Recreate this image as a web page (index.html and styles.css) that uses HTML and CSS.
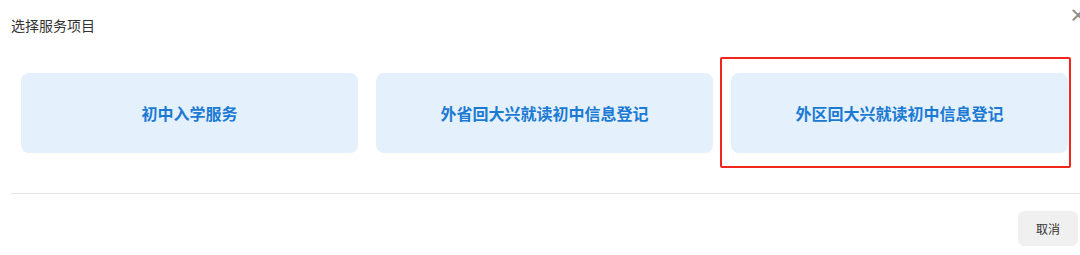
FILE: index.html
```html
<!DOCTYPE html>
<html lang="zh-CN">
<head>
  <meta charset="UTF-8" />
  <meta name="viewport" content="width=device-width, initial-scale=1.0"/>
  <title>选择服务项目</title>
  <link rel="stylesheet" href="styles.css">
</head>
<body>

  <!-- service picker dialog -->
  <div class="dialog">
    <div class="dialog-header">
      <span class="dialog-title">选择服务项目</span>
      <span class="dialog-close">×</span>
    </div>

    <!-- service options -->
    <div class="service-list">
      <div class="service-card">初中入学服务</div>
      <div class="service-card">外省回大兴就读初中信息登记</div>
      <div class="service-card marked">外区回大兴就读初中信息登记</div>
    </div>

    <div class="dialog-footer">
      <button class="btn-cancel">取消</button>
    </div>
  </div>

</body>
</html>
```

FILE: styles.css
```css
body {
  margin: 0;
  background: #fff;
  font-family: "Noto Sans CJK SC", "Liberation Sans", sans-serif;
  overflow: hidden;
}
.dialog {
  position: relative;
  width: 1080px;
  height: 255px;
  padding-left: 11px;
  box-sizing: border-box;
}
.dialog-header {
  padding-top: 12px;
  height: 36px;
}
.dialog-title {
  font-size: 14px;
  line-height: 20px;
  color: #333;
}
.dialog-close {
  position: absolute;
  top: 4px;
  right: -7px;
  font-size: 18px;
  font-weight: bold;
  color: #8a8a8a;
  line-height: 20px;
}
.service-list {
  display: flex;
  gap: 18px;
  margin-top: 25px;
  padding: 0 10px;
}
.service-card {
  position: relative;
  width: 337px;
  height: 80px;
  display: flex;
  align-items: center;
  justify-content: center;
  background: #e4f0fb;
  border-radius: 8px;
  color: #1b7ad3;
  font-size: 16px;
  font-weight: bold;
}
.service-card.marked::after {
  content: "";
  position: absolute;
  top: -16px;
  left: -11px;
  right: -3px;
  bottom: -15px;
  border: 2px solid #f0251c;
  border-radius: 2px;
}
.dialog-footer {
  margin-top: 40px;
  border-top: 1px solid #e6e6e6;
  padding-top: 17px;
  display: flex;
  justify-content: flex-end;
  padding-right: 2px;
}
.btn-cancel {
  width: 60px;
  height: 35px;
  border: none;
  border-radius: 6px;
  background: #f0f0f0;
  color: #333;
  font-family: "Noto Sans CJK SC", sans-serif;
  font-size: 12px;
  cursor: pointer;
}
```
